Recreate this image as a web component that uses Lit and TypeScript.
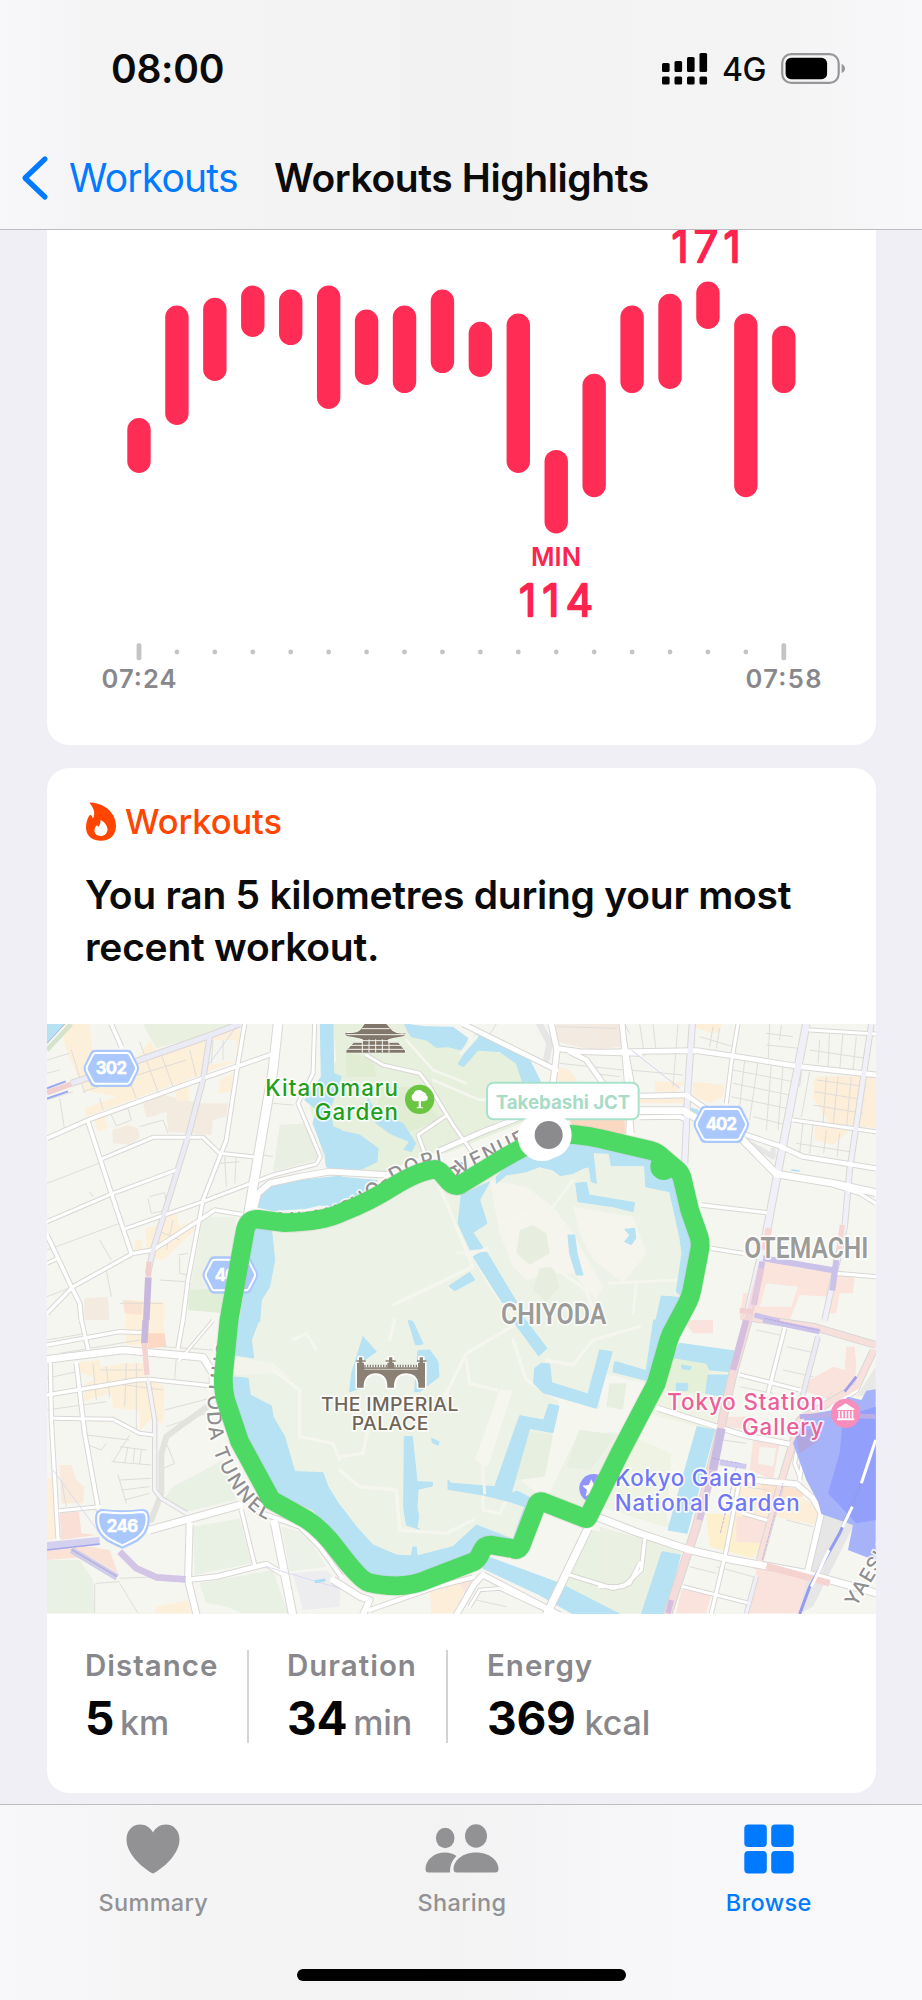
import { LitElement, html, svg, css } from "lit";
import { customElement } from "lit/decorators.js";

const BARS: [number, number][] = [
  [418.1, 472.9], [305.5, 424.9], [297.8, 380.9], [285.6, 337], [289.6, 345.1], [285.6, 409],
  [309.6, 385], [305.5, 393.1], [289.6, 373.1], [321.8, 376.9], [313.6, 472.9], [449.9, 533.4],
  [373.8, 497.2], [305.5, 393.1], [293.7, 389], [281.5, 328.9], [313.6, 497.2], [325.8, 393.1],
];

@customElement("heart-chart")
class HeartChart extends LitElement {
  static styles = css`
    :host { display: block; }
    svg { display: block; width: 829px; height: 515px; font-family: Inter, sans-serif; }
    .bar { fill: #ff2d55; }
    .tick { fill: #c4c4c6; }
    .num { fill: #ff2450; stroke: #ff2450; stroke-width: 2.6; stroke-linejoin: round; font-size: 43.5px; font-weight: 300; text-anchor: middle; }
    .min { fill: #ff2450; font-size: 25.5px; font-weight: 600; text-anchor: middle; }
    .time { fill: #88888c; font-size: 25.5px; font-weight: 600; text-anchor: middle; }
  `;
  render() {
    const cx = (i: number) => 139 + 37.93 * i;
    return html`<svg viewBox="47 230 829 515">
      ${BARS.map(([a, b], i) => svg`<rect class="bar" x=${cx(i) - 11.7} y=${a} width="23.4" height=${b - a} rx="11.7"></rect>`)}
      ${BARS.map((_, i) => i === 0 || i === 17
        ? svg`<rect class="tick" x=${cx(i) - 2.4} y="643.3" width="4.8" height="17" rx="2"></rect>`
        : svg`<circle class="tick" cx=${cx(i)} cy="652" r="2.4"></circle>`)}
      <text class="num" x="706" y="262.4" textLength="69">171</text>
      <text class="min" x="556" y="566" textLength="50">MIN</text>
      <text class="num" x="556" y="616" textLength="74">114</text>
      <text class="time" x="139" y="688" textLength="75">07:24</text>
      <text class="time" x="783.5" y="688" textLength="76">07:58</text>
    </svg>`;
  }
}

/* The map is drawn on a grid of 3 units per pixel, split into six sheets. */
const SHEETS: Record<string, [number, number]> = {
  a: [0, 0], b: [900, 0], c: [1680, 0], d: [0, 900], e: [900, 900], f: [1680, 900],
};
type Area = [string, string, string];
type Road = [string, number, string, string?];
const at = (s: string) => `translate(${SHEETS[s][0]} ${SHEETS[s][1]})`;

const LAND: Area[] = [
  ["a", "#e9f0e0", "310,12 580,12 480,50 350,85"],
  ["a", "#fdf0da", "60,12 150,12 160,100 290,120 330,60 350,90 500,50 600,20 600,120 480,165 140,290 135,265 230,230 130,210 80,90"],
  ["a", "#f5f5f0", "170,12 230,12 240,80 165,85"],
  ["a", "#f5f5f0", "510,60 590,60 590,120 510,135"],
  ["a", "#f3ebe0", "310,250 350,220 480,250 565,250 560,290 520,300 515,345 385,335 380,275 320,295"],
  ["a", "#f3ebe0", "218,330 265,315 295,325 300,355 270,375 220,370"],
  ["a", "#fdf0da", "408,190 445,180 450,240 410,245"],
  ["a", "#fdf0da", "540,180 580,160 575,215 535,220"],
  ["a", "#fdf0da", "165,300 195,290 205,325 175,335"],
  ["a", "#e9efe2", "720,315 800,310 835,400 830,420 700,455"],
  ["a", "#ebf1e5", "490,590 590,590 575,720 555,880 445,870 450,810"],
  ["a", "#e0eed8", "450,810 550,805 555,880 445,870"],
  ["a", "#fdf0da", "345,620 385,580 410,580 420,620 460,600 465,630 370,720 340,715 320,680 315,625"],
  ["a", "#fdf0da", "285,660 305,660 310,700 285,700"],
  ["a", "#f3ebe0", "135,835 205,830 210,900 130,900"],
  ["a", "#fdf0da", "250,840 375,845 375,900 260,900"],
  ["a", "#fbe3d3", "250,840 310,845 305,885 255,880"],
  ["b", "#e6f0dc", "-20,12 200,12 380,60 560,130 590,180 590,290 320,400 270,400 130,460 -40,440 -90,260 -10,120"],
  ["b", "#e0edd2", "120,200 230,200 300,300 200,340 110,300"],
  ["b", "#e0edd2", "20,100 100,110 110,170 20,170"],
  ["b", "#f3ebe2", "650,12 840,12 845,80 760,90 650,65"],
  ["b", "#fdeeda", "655,140 690,150 715,185 650,185"],
  ["b", "#fbd8c2", "690,300 855,300 855,345 700,330"],
  ["b", "#fdeeda", "800,250 860,250 860,300 800,300"],
  ["c", "#f3e9df", "0,12 60,12 75,80 0,80"],
  ["c", "#fbd8c2", "0,300 75,300 75,340 0,325"],
  ["c", "#fdeeda", "165,185 255,185 230,215 165,215"],
  ["c", "#fdeeda", "280,185 375,195 370,230 330,250 280,225"],
  ["c", "#fdeeda", "120,235 250,235 250,250 120,250"],
  ["c", "#fdeeda", "285,12 365,12 360,35 340,40 290,25"],
  ["c", "#fdeeda", "645,170 830,165 830,325 690,310 640,235"],
  ["c", "#fdeeda", "645,320 750,330 700,375 645,360"],
  ["c", "#fae4dc", "500,720 600,745 700,745 765,775 760,820 720,820 710,880 680,880 690,830 600,825 570,900 420,900 430,820 470,820"],
  ["c", "#f5f5f0", "500,790 595,800 575,860 480,860"],
  ["d", "#fdf0da", "255,0 370,0 380,80 260,75"],
  ["d", "#fbd9c4", "325,40 375,40 380,80 325,85"],
  ["d", "#fdf0da", "120,125 180,120 180,140 260,130 310,130 330,180 375,200 370,310 330,300 300,335 300,270 220,265 215,220 130,245 140,190 165,175 120,155"],
  ["d", "#faeadb", "60,435 95,435 110,480 135,500 130,550 65,550"],
  ["d", "#fdf0da", "22,475 45,475 50,560 60,655 22,660"],
  ["d", "#f9dfd6", "60,580 118,575 125,640 170,645 65,660"],
  ["d", "#fae3d6", "22,680 60,665 210,690 235,760 150,710 22,720"],
  ["d", "#e9f1e5", "400,500 550,420 590,540 440,575 370,540"],
  ["d", "#e9f1e5", "460,620 600,595 635,730 465,765"],
  ["d", "#e9f1e5", "22,720 120,720 160,780 165,880 22,880"],
  ["d", "#e9f1e5", "480,790 700,750 745,880 610,880 560,860 500,850"],
  ["d", "#ededf0", "760,760 860,750 900,790 900,860 790,870"],
  ["d", "#edf2e8", "725,620 800,640 860,740 750,755"],
  ["d", "#fdf0da", "350,860 445,840 455,880 345,880"],
  ["e", "#fdeeda", "270,800 375,785 370,830 340,880 275,880"],
  ["e", "#f8e5dc", "360,790 400,780 380,830"],
  ["e", "#e9f1e2", "760,630 900,670 900,880 830,880 650,810"],
  ["f", "#eef3e4", "200,60 420,100 340,330 260,640 0,560 0,440"],
  ["f", "#e5f0d8", "215,110 330,135 320,220 200,215"],
  ["f", "#eaf1e2", "0,620 250,690 180,880 0,880"],
  ["f", "#f9e3dc", "250,0 340,0 340,40 280,40"],
  ["f", "#f9e3dc", "630,180 700,140 735,150 740,80 765,80 770,140 760,230 690,240 620,215"],
  ["f", "#f7e4dc", "385,290 460,290 450,330 375,320"],
  ["f", "#f9e3dc", "460,360 540,370 520,480 450,450"],
  ["f", "#f5f5f0", "480,380 530,385 520,440 475,430"],
  ["f", "#fdeeda", "400,480 520,495 660,560 650,615 525,590 410,590"],
  ["f", "#fbe3cf", "480,485 610,510 610,530 500,540"],
  ["f", "#fdf0cd", "320,580 480,590 500,660 460,715 330,680"],
  ["f", "#f9e3dc", "410,590 505,590 500,670 410,665"],
  ["f", "#f9e3dc", "410,720 640,750 600,880 450,880 470,750"],
  ["f", "#f9e3dc", "245,810 335,820 320,880 230,880"],
  ["f", "#e6e6e6", "660,580 765,610 690,760 640,860 600,880 625,750"],
  ["f", "#e8e8e4", "828,140 828,220 770,230"],
];

const PALACE = "640,620 830,610 920,580 1130,460 1200,450 1250,500 1440,400 1530,360 1840,400 1920,460 1975,680 1940,860 1850,1090 1640,1490 1505,1440 1435,1590 1345,1575 1300,1630 1090,1700 970,1690 800,1490 690,1440 551,1080 570,900";

const GROUNDS: Area[] = [
  ["b", "#f5f5ee", "450,480 560,500 640,560 700,640 790,800 770,840 700,760 640,760 560,780 520,740 480,640"],
  ["b", "#f5f5ee", "700,560 880,590 920,700 850,790 760,720 720,640"],
  ["b", "#e7eedf", "540,630 580,615 620,640 630,700 570,735 530,700"],
  ["b", "#e7eedf", "600,745 640,740 660,800 620,845 580,810"],
  ["e", "#f5f6ee", "480,210 520,210 445,440 405,420"],
  ["e", "#f5f6ee", "660,230 860,290 800,340 720,330 620,540 540,480 610,470"],
  ["e", "#e7efe0", "565,335 640,345 615,470 525,480"],
  ["e", "#e7efe0", "720,330 830,345 750,450 680,440"],
  ["e", "#f5f6ee", "820,165 900,190 900,300 780,290"],
  ["e", "#e5eddc", "825,190 860,190 850,280 805,270"],
  ["f", "#f6f6f0", "0,160 140,190 60,340 0,330"],
  ["f", "#e7efe0", "30,190 80,190 70,270 20,260"],
  ["f", "#f5f6ee", "110,270 290,320 240,620 200,600 215,400 100,350"],
  ["d", "#f3f5ec", "580,110 700,130 760,180 700,160 580,165"],
];

const WATER: [string, string][] = [
  ["a", "842,12 880,12 882,160 905,170 870,270 880,320 905,330 905,465 860,440 857,405 820,310 832,270 795,240 845,170"],
  ["a", "655,510 700,490 905,468 905,562 840,555 800,565 700,572 650,560"],
  ["a", "645,620 695,625 705,720 690,800 665,840 660,905 600,905"],
  ["a", "22,12 75,12 22,70"],
  ["d", "590,0 658,0 635,60 642,114 583,105"],
  ["d", "575,170 625,175 632,225 695,258 700,290 735,350 765,455 850,458 865,500 902,560 902,670 820,570 700,520 640,400 575,240"],
  ["e", "0,555 50,620 100,675 170,705 215,708 220,680 230,682 232,708 340,680 410,615 520,658 555,560 510,545 430,525 325,508 325,480 335,490 465,500 540,287 612,300 628,252 658,258 640,338 570,325 515,520 532,513 575,535 540,700 430,690 400,740 260,790 80,790 0,690"],
  ["e", "194,350 218,350 232,485 278,487 278,498 235,508 232,560 237,590 232,625 240,628 200,615 192,560"],
  ["e", "522,5 550,-10 622,85 597,108"],
  ["e", "585,145 605,130 630,132 636,188 745,222 780,90 817,97 770,265 610,218 582,190"],
  ["e", "828,125 925,155 925,182 820,155"],
  ["e", "205,0 220,5 250,72 228,75"],
  ["e", "70,50 110,95 60,130 60,205 30,215 36,160"],
  ["e", "235,92 270,90 295,125 298,170 240,215 225,215"],
  ["e", "276,355 298,365 296,376 278,368"],
  ["e", "430,705 660,790 840,882 700,882 600,825 430,745"],
  ["f", "240,70 420,95 395,155 330,150 320,130 215,112"],
  ["f", "325,165 390,165 370,230 318,220"],
  ["f", "292,320 345,330 262,640 205,630"],
  ["f", "187,695 242,705 197,882 125,882"],
  ["f", "0,90 37,95 0,210"],
  ["f", "45,125 150,155 145,182 40,155"],
  ["f", "162,0 200,0 170,160 140,150"],
  ["f", "230,190 265,190 262,212 230,212"],
  ["f", "245,135 275,140 270,150 248,146"],
  ["c", "30,390 180,390 240,480 270,560 300,680 260,840 230,815 247,700 240,650 210,515 138,500 135,437 35,437"],
  ["c", "185,828 270,835 250,905 168,905"],
  ["c", "75,628 105,625 108,655 95,674 75,665 90,645"],
  ["c", "250,258 295,270 300,300 280,300"],
  ["b", "195,12 255,20 340,22 385,55 365,90 325,80 290,82 260,60 215,50 205,35"],
  ["b", "410,40 500,68 560,100 605,190 550,190 530,130 480,95 415,90 372,140 355,132 385,85"],
  ["b", "0,332 60,345 115,385 112,425 65,448 -10,446"],
  ["b", "-10,470 115,482 60,520 -10,562"],
  ["b", "85,235 97,255 100,280 190,310 228,370 215,395 193,388 210,365 150,340 110,310 90,270"],
  ["b", "470,470 540,400 700,370 870,380 870,435 815,435 808,400 760,398 765,440 770,490 755,485 748,440 730,445 700,460 662,467 640,450 600,440 560,455 500,465 470,490"],
  ["b", "365,525 450,485 420,540 442,610 400,638 430,683 395,697 355,610"],
  ["b", "400,710 437,690 532,848 488,848"],
  ["b", "328,798 390,757 405,780 345,812"],
  ["b", "685,645 705,645 712,700 730,765 710,765 690,700"],
  ["b", "708,490 740,487 748,525 885,548 880,575 820,560 715,545"],
];

const PATHS: Road[] = [
  ["b", 10, "160,855 400,740 300,500"], ["b", 10, "395,700 460,810 530,900"],
  ["b", 10, "380,705 440,685"], ["b", 10, "640,740 740,810 770,900"],
  ["e", 10, "165,0 150,60"], ["e", 10, "550,0 380,100 310,240"], ["e", 10, "380,120 390,190 470,210"],
  ["e", 10, "520,60 560,180 660,240"], ["e", 10, "0,410 70,400 90,300"],
  ["e", 10, "0,450 60,500 170,510 180,630 320,640 400,600"], ["e", 10, "430,430 430,570 480,580 520,500"],
  ["e", 10, "620,120 700,135 760,60 900,20"], ["d", 10, "700,150 780,210 780,350 880,370 900,420"],
  ["d", 8, "760,60 800,40 830,90"], ["c", 8, "30,790 230,780"], ["c", 8, "110,790 100,880"],
  ["b", 8, "500,600 640,560 700,480"], ["b", 8, "440,330 560,260 600,200"], ["b", 8, "280,180 420,240 540,230"],
  ["b", 8, "200,60 280,150 380,190"],
];

const LANES: [string, string][] = [
  ["a", "M22,120L90,100M95,90L135,220M130,215L440,120M300,65L360,230M360,90L400,200M22,240L100,215M60,235L75,330M215,280L265,265L275,300L230,318L215,285M300,320L370,300L385,340M22,490L190,425M22,690L240,610M180,660L215,720M200,750L215,830M22,830L100,800M330,530L375,518L385,570L335,580L325,535M415,705L445,700M420,710L420,760L445,765M360,780L440,785M555,410L560,500M590,410L585,490M540,430L600,425M640,400L700,410M700,250L760,255M150,515L160,530M450,90L470,170M520,60L515,130M550,60L550,120M240,850L370,850M240,105L290,235M22,160L60,150M180,235L190,270M400,600L380,690M350,630L420,660"],
  ["b", "M650,20L830,25M660,130L850,150M440,60L470,12M760,160L840,170"],
  ["c", "M120,12L135,110M160,12L170,100M235,12L220,200M90,150L250,165M300,50L400,80M340,20L330,80M360,25L350,85M500,40L580,50M510,12L505,130M545,15L540,60M500,75L600,85M400,150L580,185M435,120L420,260M475,125L450,300M515,130L500,330M550,140L535,330M400,190L570,225M395,230L560,265M460,290L560,315M610,110L600,200M630,155L605,290M660,60L655,130M690,30L685,140M730,40L720,150M770,50L760,150M630,90L800,115M650,180L800,200M645,215L795,240M640,255L790,280M680,170L670,310M715,170L700,320M755,170L740,325M610,310L600,400M640,315L630,400M680,330L672,400M720,340L712,410M590,370L750,395M800,330L828,340M90,40L75,12"],
  ["d", "M22,60L140,40M60,100L300,60M20,175L110,155M20,270L200,245M140,345L270,360M200,370L185,390L145,375M270,345L220,425M240,380L320,390M265,380L255,430M285,385L280,430M305,390L300,432M215,425L335,435M380,370L405,430L360,450M235,465L260,550M240,480L335,475M245,510L330,500M255,540L330,520M160,130L170,240M200,140L210,230M260,130L255,260M290,130L290,330M180,150L310,150M220,190L370,210M375,270L510,235M380,320L500,280M165,790L165,880M240,775L360,770M170,790L240,785M370,80L520,90M410,110L405,180M65,480L80,560M240,790L295,880"],
  ["e", "M700,770L830,800M410,840L500,860"],
  ["f", "M420,200L520,220M470,30L540,45M560,80L650,100M550,150L640,170M370,360L440,370M440,500L500,510M350,740L460,770M270,740L350,760M560,600L640,620"],
];

const ROADS: Road[] = [
  ["a", 11, "22,355 150,298 490,175 690,105"], ["a", 11, "215,12 245,80"],
  ["a", 10, "615,12 595,130 560,360 490,540 445,780 430,900"],
  ["a", 11, "145,305 215,520 275,700"], ["a", 9, "190,415 340,352 490,352 540,400 640,410"],
  ["a", 9, "22,605 220,520 410,450"], ["a", 9, "260,625 490,545 700,465 830,432 842,410 775,250 820,160 825,12"],
  ["a", 10, "22,880 100,800 280,700 340,690 480,600 525,570 605,583"],
  ["a", 11, "22,645 95,800 120,850 125,900"], ["a", 8, "22,730 55,715"],
  ["a", 26, "715,12 700,150 625,590"],
  ["a", 17, "645,560 655,520 690,490 780,470 870,455 1050,465"],
  ["a", 15, "95,190 300,120 500,50 600,12", "#ebebf6"],
  ["a", 13, "510,50 490,180 445,350 380,560 340,690 325,760", "#ebebf6"],
  ["d", 10, "22,75 240,35 310,38"], ["d", 20, "22,118 250,90 490,112 520,160 520,200"],
  ["d", 10, "22,225 290,180 330,178 510,197"], ["d", 10, "125,0 145,85"], ["d", 10, "430,0 415,85"],
  ["d", 10, "32,130 35,300 55,655"], ["d", 11, "110,130 135,340 180,590"],
  ["d", 9, "40,295 220,298 300,340 340,345"], ["d", 9, "60,572 180,560"],
  ["d", 10, "325,180 345,300 345,510 365,535 440,580", "#f3f3f8"],
  ["d", 20, "330,630 600,555"], ["d", 18, "450,615 445,780 472,890"], ["d", 10, "605,570 645,735"],
  ["d", 22, "705,610 760,890"], ["d", 14, "440,780 530,770 680,732 735,765"],
  ["d", 12, "640,570 780,620 840,680 905,770"], ["d", 6, "520,1 420,120"],
  ["b", 14, "300,392 430,335 560,285"], ["b", 9, "80,105 130,135 240,160 270,200 340,315 400,400"],
  ["b", 9, "315,290 235,345 255,400"], ["b", 14, "370,12 590,120 650,150"],
  ["b", 16, "635,12 652,90 640,190"], ["b", 14, "650,85 720,95 900,100"], ["b", 14, "690,95 740,120 790,190"],
  ["b", 14, "848,12 875,340"],
  ["c", 11, "65,12 95,180 85,340"], ["c", 14, "0,96 290,92 400,108 600,140 830,165"],
  ["c", 9, "415,12 395,130 380,250"], ["c", 9, "630,30 828,42"], ["c", 9, "580,300 828,335"],
  ["c", 10, "305,555 500,578"], ["c", 10, "335,685 430,700"], ["c", 10, "710,760 828,770"],
  ["c", 12, "120,292 240,290 262,300 255,430"],
  ["c", 16, "278,12 265,200 255,430", "#f0f0f9"],
  ["c", 14, "815,12 750,450 735,620 675,900", "#f0f0f9"],
  ["c", 20, "620,12 545,400 500,640 440,900", "#f0f0f9"],
  ["c", 13, "120,228 260,225 310,260 440,345 545,380 610,410 828,445"],
  ["c", 20, "120,272 250,272 300,300 430,360 530,462 700,490 828,518"], ["c", 10, "700,495 780,520 828,550"],
  ["f", 10, "420,165 600,210"], ["f", 10, "555,25 505,220"], ["f", 12, "655,50 600,260", "#ebebf8"],
  ["f", 14, "175,265 350,320 430,345 570,372"], ["f", 10, "420,480 380,690 335,880"],
  ["f", 9, "430,580 500,600"], ["f", 9, "250,800 450,850"], ["f", 10, "470,770 440,880", "#efeff9"],
  ["f", 10, "135,660 125,750 70,800 0,800"], ["e", 10, "690,765 820,805 870,790 900,730"],
  ["f", 12, "820,90 770,210 700,260"], ["f", 9, "600,480 610,410 590,400 585,430 600,470"],
  ["f", 22, "445,0 400,160 350,380 290,620 205,880", "#f5dcda"],
  ["f", 18, "430,-10 640,20 828,75", "#f7dfdc"],
  ["f", 18, "820,95 770,200 600,300 555,450 480,720", "#f8e0dc"],
  ["e", 20, "770,590 900,640 1050,690 1180,720 1400,760 1630,825"],
  ["f", 16, "455,480 590,492 640,535 665,580 625,750"],
  ["e", 22, "745,625 680,760 620,885"], ["e", 16, "430,765 660,885"], ["e", 16, "430,765 405,790 350,885"],
  ["e", 12, "90,870 290,800 400,772"], ["e", 18, "-20,780 60,830 90,840 70,885"], ["e", 8, "390,860 420,810 480,805 640,880"],
];

const TINTS: [string, number, string, string][] = [
  ["a", 16, "328,725 326,770", "#f2cfcf"], ["a", 20, "326,772 320,900", "#c9b8de"],
  ["a", 16, "22,218 95,192", "#f2cfcf"], ["a", 6, "22,205 78,184", "#98a7f2"], ["a", 6, "22,236 85,214", "#98a7f2"],
  ["a", 14, "22,90 95,12", "#d5e3cc"], ["a", 3, "22,70 75,12", "#a8b8d8"],
  ["a", 3, "510,130 590,20", "#d5d8f5"],
  ["d", 20, "318,0 314,70", "#c9b8de"], ["d", 16, "314,70 322,165", "#f4d3d0"],
  ["d", 24, "22,678 180,663", "#d4d0f0"], ["d", 5, "22,690 180,672", "#a3a8ec"],
  ["d", 20, "95,690 232,772", "#cfcde8"], ["d", 4, "95,688 232,770", "#b5b0e0"],
  ["d", 20, "240,695 290,745 350,772 438,778", "#d2c5e6"], ["d", 3, "40,450 180,640", "#dadaf3"],
  ["d", 3, "680,740 900,805", "#dadaf3"], ["d", 9, "825,785 857,780", "#a9def3"],
  ["c", 18, "490,715 710,752", "#cbc2ea"], ["c", 18, "710,720 698,812", "#cbc2ea"],
  ["c", 18, "488,725 462,855", "#d0c0e4"], ["c", 20, "508,625 495,690", "#f7d5d2"], ["c", 16, "728,615 718,690", "#f7d5d2"],
  ["c", 22, "485,745 445,900", "#f1cfd388"], ["c", 16, "420,872 460,875", "#f3cfd2"],
  ["c", 3, "95,90 240,205", "#d3d3f2"], ["c", 16, "465,885 540,905", "#cbc2ea"], ["c", 5, "575,450 600,453", "#a9def3"],
  ["f", 16, "490,0 660,35", "#cbc2ea"], ["f", 20, "440,0 400,150", "#d5bfdf"],
  ["f", 26, "365,325 340,450", "#c9bce2"], ["f", 20, "340,450 300,600", "#d8c4df"], ["f", 16, "360,428 440,440", "#cfcaf0"],
  ["f", 16, "215,840 205,880", "#d9bde0"], ["f", 20, "500,738 690,790", "#f5d3d0"],
];

const ROUTE = "M1525,345 C1570,338 1640,345 1690,358 L1835,392 Q1855,398 1868,412 L1915,452 Q1925,462 1929,480 L1950,570 L1978,650 Q1984,672 1980,690 L1957,810 Q1953,830 1943,850 L1895,940 Q1885,965 1880,985 L1850,1090 L1740,1300 L1645,1492 Q1640,1500 1630,1493 L1515,1448 Q1500,1440 1492,1452 L1445,1575 Q1435,1595 1420,1586 L1360,1576 Q1335,1573 1325,1595 Q1315,1620 1300,1626 L1165,1678 Q1090,1712 985,1687 Q960,1678 895,1592 Q850,1530 800,1498 L695,1440 L600,1265 L558,1140 Q550,1110 551,1070 L568,900 L615,640 Q622,594 655,598 L735,608 Q850,605 905,578 Q990,545 1060,500 Q1140,450 1188,448 Q1200,450 1215,470 Q1240,505 1262,494 L1350,440 Q1420,395 1525,345 Z";

const hex = (x: number, y: number, n: string) => svg`<g transform=${`translate(${x} ${y})`}>
  <path d="M-50,-56H50Q58,-56 62,-49L82,-8Q85,0 82,8L62,49Q58,56 50,56H-50Q-58,56 -62,49L-82,8Q-85,0 -82,-8L-62,-49Q-58,-56 -50,-56Z" fill="#aac8fb"></path>
  <path d="M-47,-46H47Q52,-46 55,-41L73,-6Q75,0 73,6L55,41Q52,46 47,46H-47Q-52,46 -55,41L-73,6Q-75,0 -73,-6L-55,-41Q-52,-46 -47,-46Z" fill="none" stroke="#fff" stroke-width="6"></path>
  <text class="shield" y="18" textLength="94">${n}</text></g>`;

@customElement("route-map")
class RouteMap extends LitElement {
  static styles = css`
    :host { display: block; }
    svg { display: block; width: 829px; height: 590px; font-family: Inter, sans-serif; }
    .line { fill: none; stroke-linejoin: round; stroke-linecap: round; }
    .flat { fill: none; stroke-linejoin: round; }
    .lane { fill: none; stroke: #dfddd9; stroke-width: 3; }
    .halo { paint-order: stroke; stroke: #ffffffd0; stroke-width: 10; stroke-linejoin: round; }
    .shield { fill: #fff; stroke: #fff; stroke-width: 1.5; font-size: 50px; font-weight: 700; text-anchor: middle; }
    .poi { font-size: 67px; font-weight: 550; }
    .green { fill: #1f9f1a; }
    .pink { fill: #ec5f98; }
    .violet { fill: #7078f5; }
    .sight { fill: #6e6658; font-size: 58px; font-weight: 550; }
    .area { fill: #9b9b99; font-family: Roboto, sans-serif; font-size: 86px; font-weight: 600; }
    .street { fill: #8f8f8f; font-size: 59px; font-weight: 500; }
    .jct { fill: #a9dcc6; font-size: 56px; font-weight: 650; }
  `;
  render() {
    return html`<svg viewBox="22 12 2487 1770">
      <rect x="0" y="0" width="2600" height="1800" fill="#f6f6f1"></rect>
      ${LAND.map(([s, c, p]) => svg`<polygon transform=${at(s)} fill=${c} points=${p}></polygon>`)}
      ${LANES.map(([s, d]) => svg`<path class="lane" transform=${at(s)} d=${d}></path>`)}
      <polygon points=${PALACE} fill="#edf2e6"></polygon>
      ${GROUNDS.map(([s, c, p]) => svg`<polygon transform=${at(s)} fill=${c} points=${p}></polygon>`)}
      ${PATHS.map(([s, w, p]) => svg`<polyline class="line" transform=${at(s)} stroke="#f5f6ee" stroke-width=${w} points=${p}></polyline>`)}
      ${WATER.map(([s, p]) => svg`<polygon transform=${at(s)} fill="#b6e2f4" stroke="#b6e2f4" stroke-width="3" stroke-linejoin="round" points=${p}></polygon>`)}
      <path d="M1250,700L1345,690M1330,1345L1335,1420" class="line" stroke="#f3f5ec" stroke-width="9"></path>
      <path d="M1265,100L1310,50" class="line" stroke="#f3f5ec" stroke-width="12"></path>
      <polyline class="line" points="510,1155 420,1220 380,1250 365,1300 365,1420 335,1500" stroke="#e3e3dd" stroke-width="18"></polyline>
      <polyline class="line" points="1500,12 1530,70 1520,120" stroke="#e6e6e6" stroke-width="20"></polyline>
      <polyline class="line" points="2130,370 2200,410 2200,390" stroke="#e6e6e6" stroke-width="16"></polyline>
      ${ROADS.map(([s, w, p]) => svg`<polyline class="flat" transform=${at(s)} stroke="#d9d7d4" stroke-width=${w + 6} points=${p}></polyline>`)}
      ${ROADS.map(([s, w, p, c]) => svg`<polyline class="line" transform=${at(s)} stroke=${c ?? "#ffffff"} stroke-width=${w} points=${p}></polyline>`)}
      ${TINTS.map(([s, w, p, c]) => svg`<polyline class="flat" transform=${at(s)} stroke=${c} stroke-width=${w} points=${p}></polyline>`)}
      <path d="M2168,1618L2230,1390M2090,1340L2042,1540M2020,1315L2100,1330M2175,895L2340,932" class="line" stroke="#a99ddd" stroke-width="2" stroke-dasharray="8 5"></path>
      <g transform=${at("f")}>
        <polygon points="580,370 620,285 700,270 745,230 785,240 800,212 828,208 828,722 745,690 760,615 665,582 655,545 620,480" fill="#a6b3f8"></polygon>
        <polygon points="730,290 828,260 828,600 770,610 685,520 720,400" fill="#929ffb"></polygon>
        <polygon points="590,350 640,320 660,360 600,400" fill="#b3a5dd"></polygon>
        <polyline points="600,290 700,285 828,290" class="flat" stroke="#b9aee6" stroke-width="14"></polyline>
        <polyline points="828,360 785,490 720,640 630,800 600,882" class="flat" stroke="#929cf0" stroke-width="9"></polyline>
        <polyline points="828,360 785,490" class="flat" stroke="#fff" stroke-width="9"></polyline>
        <path d="M758,560L728,622M688,690L635,800" class="flat" stroke="#fff" stroke-width="9"></path>
        <path d="M770,170L735,215" class="flat" stroke="#9f9fee" stroke-width="8"></path>
      </g>

      <path id="dori" fill="none" d="M655,620 L800,618 Q900,604 965,562 L1065,485 Q1150,436 1222,430 Q1235,468 1255,464 L1490,352"></path>
      <path id="tunnel" fill="none" d="M535,960 Q503,1080 503,1190 Q508,1280 545,1345 Q610,1480 700,1506 L800,1520"></path>
      <text class="street halo"><textPath href="#dori" textLength="895">DAIKANCHO-DORI AVENUE</textPath></text>
      <text class="street halo"><textPath href="#tunnel" textLength="606">CHIYODA TUNNEL</textPath></text>
      ${hex(215, 145, "302")} ${hex(572, 765, "402")} ${hex(2045, 313, "402")}
      <g transform="translate(248 1525)">
        <path d="M-60,-58Q0,-50 60,-58Q78,-58 81,-40Q88,10 45,40Q15,55 0,61Q-15,55 -45,40Q-88,10 -81,-40Q-78,-58 -60,-58Z" fill="#aac8fb"></path>
        <path d="M-57,-49Q0,-42 57,-49Q70,-49 72,-37Q77,6 40,31Q14,45 0,51Q-14,45 -40,31Q-77,6 -72,-37Q-70,-49 -57,-49Z" fill="none" stroke="#fff" stroke-width="6"></path>
        <text class="shield" y="11" textLength="94">246</text>
      </g>
      <circle cx="1662" cy="1405" r="43" fill="#9195f9"></circle>
      <path d="M1655,1378l8,17 19,2 -14,13 4,19 -17,-10 -17,10 4,-19 -14,-13 19,-2z" fill="#fff"></path>
      <text class="poi violet halo" x="1726" y="1397" textLength="424">Kokyo Gaien</text>

      <path d=${ROUTE} fill="none" stroke="#c9c0bb" stroke-width="62" stroke-linejoin="round" opacity=".3"></path>
      <path d=${ROUTE} fill="none" stroke="#4cd964" stroke-width="56" stroke-linejoin="round"></path>
      <circle cx="1872" cy="440" r="40" fill="#4cd964"></circle>

      <rect x="1342" y="188" width="455" height="110" rx="20" fill="#fff" stroke="#a9e2cb" stroke-width="6"></rect>
      <text class="jct" x="1368" y="268" textLength="404">Takebashi JCT</text>
      <circle cx="1507" cy="350" r="73" fill="#fff"></circle>
      <circle cx="1525" cy="345" r="71" fill="#fff"></circle>
      <circle cx="1527" cy="345" r="42" fill="#8b8b8e"></circle>

      <g fill="#81786b" stroke="#fff" stroke-width="3" paint-order="stroke">
        <path d="M975,12H1040L1058,32Q1075,44 1098,40L1094,48Q1060,54 1046,58V68H1076L1096,92V98H920V92L942,68H968V58Q950,52 920,48L916,38Q950,42 962,30Z"></path>
      </g>
      <path d="M920,44H1096M946,62H1070M930,76H1086M924,88H1092M966,26H1050" stroke="#f4f3ee" stroke-width="3"></path>
      <path d="M968,58V98M988,58V98M1008,58V98M1028,58V98M1048,58V98" stroke="#f4f3ee" stroke-width="3"></path>

      <g transform="translate(900 900)" fill="#8a8174" stroke="#fff" stroke-width="10" paint-order="stroke" stroke-linejoin="round">
        <path d="M52,203V128H58V112H68V128H73V142H143V128H148V112H158V128H163V142H235V128H240V112H250V128H256V203H236V190Q232,160 200,160Q166,160 163,195V203H143V195Q140,160 108,160Q76,160 72,195V203Z"></path>
      </g>
      <path d="M950,1023H978M1038,1023H1068M1132,1023H1160" stroke="#8a8174" stroke-width="4"></path>
      <path d="M974,1038H1042M1064,1038H1134" stroke="#8a8174" stroke-width="7" stroke-dasharray="4 4"></path>
      <path d="M974,1048H1134" stroke="#f4f3ee" stroke-width="2"></path>

      <circle cx="1140" cy="238" r="44" fill="#6ac541"></circle>
      <path d="M1137,262V243Q1118,247 1116,233Q1114,225 1122,221Q1124,212 1134,211Q1144,208 1150,216Q1160,218 1160,226Q1168,232 1162,240Q1155,246 1144,243V262H1150V265H1131V262Z" fill="#fff"></path>
      <text class="poi green halo" x="677" y="229" textLength="398">Kitanomaru</text>
      <text class="poi green halo" x="825" y="300" textLength="250">Garden</text>
      <text class="area halo" x="1384" y="911" textLength="316" lengthAdjust="spacingAndGlyphs">CHIYODA</text>
      <text class="area halo" x="2114" y="713" textLength="372" lengthAdjust="spacingAndGlyphs">OTEMACHI</text>
      <text class="sight halo" x="844" y="1172" textLength="412">THE IMPERIAL</text>
      <text class="sight halo" x="936" y="1231" textLength="230">PALACE</text>
      <text class="poi pink halo" x="1883" y="1170" textLength="470">Tokyo Station</text>
      <text class="poi pink halo" x="2107" y="1246" textLength="243">Gallery</text>
      <circle cx="2418" cy="1180" r="44" fill="#f68dba"></circle>
      <path d="M2418,1150L2444,1166V1170H2392V1166ZM2396,1173h5v20h-5zM2406,1173h5v20h-5zM2416,1173h5v20h-5zM2426,1173h5v20h-5zM2436,1173h5v20h-5zM2392,1195H2444V1201H2392Z" fill="#fff"></path>
      <text class="poi violet halo" x="1725" y="1473" textLength="555">National Garden</text>
      <text class="street halo" transform="translate(2448 1764) rotate(-59)" textLength="208">YAESU</text>
    </svg>`;
  }
}

@customElement("app-root")
class AppRoot extends LitElement {
  static styles = css`
    :host { display: block; width: 922px; height: 2000px; overflow: hidden; font-family: Inter, sans-serif; color: #0b0b0c; background: #f0eff6; }
    .page { display: flex; flex-direction: column; height: 2000px; }
    svg { display: block; flex: none; }
    header { height: 229px; border-bottom: 1.5px solid #bdbdc0; box-sizing: content-box; background: linear-gradient(90deg, #f8f8fb 0, #f4f4f5 10%, #f2f2f2 50%, #f4f4f5 85%, #f8f8fa 100%); flex: none; }
    .status { display: flex; align-items: center; height: 115px; padding: 11px 77px 0 111px; }
    .clock { font-size: 39px; font-weight: 600; letter-spacing: -.3px; flex: 1; line-height: 48px; }
    .net { font-size: 32px; font-weight: 500; margin: 0 15px 0 14px; line-height: 40px; letter-spacing: -.5px; position: relative; top: 1px; }
    .nav { display: flex; align-items: center; height: 103px; padding-left: 21px; line-height: 50px; font-size: 39px; }
    .back { color: #007aff; margin-left: 20px; letter-spacing: -.8px; width: 205px; }
    .title { font-weight: 600; letter-spacing: -.4px; }
    main { flex: 1; display: flex; flex-direction: column; gap: 23px; padding: 0 46px 0 47px; min-height: 0; }
    .card { background: #fff; border-radius: 22px; overflow: hidden; flex: none; }
    .chart { border-radius: 0 0 22px 22px; height: 514.5px; }
    .workout { height: 1025px; display: flex; flex-direction: column; }
    .intro { height: 222px; padding: 34px 39px 0 38px; }
    .tag { display: flex; align-items: center; height: 40px; gap: 8px; color: #ff4500; font-size: 34.5px; font-weight: 550; letter-spacing: -.1px; }
    .headline { margin: 27px 0 0; font-size: 39px; line-height: 52px; font-weight: 600; letter-spacing: -.26px; white-space: nowrap; }
    .stats { display: flex; padding: 36px 38px 0; }
    .stat { height: 93px; }
    .stat + .stat { border-left: 2px solid #d3d3d6; padding-left: 38px; }
    .first { width: 162px; }
    .second { width: 159px; }
    .stat:last-child { padding-left: 39px; }
    .name { font-size: 29.5px; font-weight: 600; color: #88888c; line-height: 30px; letter-spacing: 1px; }
    .value { display: flex; align-items: baseline; font-size: 46px; line-height: 50px; font-weight: 700; margin-top: 13px; color: #050505; letter-spacing: -.3px; }
    .unit { font-size: 34px; font-weight: 500; color: #88888c; margin-left: 6px; letter-spacing: -.1px; }
    .last { margin-left: 9px; }
    footer { height: 195px; border-top: 1.5px solid #bdbdc2; background: linear-gradient(90deg, #f8f8fa 0, #f4f4f5 20%, #f3f3f4 50%, #f8f8fb 75%, #f9f9fc 100%); flex: none; display: flex; flex-direction: column; align-items: center; }
    .tabs { display: flex; width: 100%; height: 164px; flex: none; }
    .tab { flex: 1; display: flex; flex-direction: column; align-items: center; padding-top: 18px; color: #929295; font-size: 23.5px; font-weight: 500; letter-spacing: .3px; gap: 13px; line-height: 30px; }
    .tab:first-child { padding-right: 2px; }
    .on { color: #007aff; }
    .home { width: 329px; height: 12px; border-radius: 6px; background: #000; }
  `;
  render() {
    return html`<div class="page">
      <header>
        <div class="status">
          <div class="clock">08:00</div>
          <svg width="46" height="32" viewBox="0 0 46 32"><g fill="#000">
            <rect x="0" y="10" width="7.6" height="9" rx="1.5"></rect><rect x="12.5" y="8" width="7.6" height="11" rx="1.5"></rect>
            <rect x="25" y="4" width="7.6" height="15" rx="1.5"></rect><rect x="37.5" y="0" width="7.6" height="19" rx="1.5"></rect>
            <rect x="0" y="23.5" width="7.6" height="8" rx="1.5"></rect><rect x="12.5" y="23.5" width="7.6" height="8" rx="1.5"></rect>
            <rect x="25" y="23.5" width="7.6" height="8" rx="1.5"></rect><rect x="37.5" y="23.5" width="7.6" height="8" rx="1.5"></rect></g>
          </svg>
          <div class="net">4G</div>
          <svg width="64" height="31" viewBox="0 0 64 31">
            <rect x="1.2" y="1.2" width="56.5" height="28.6" rx="9" fill="none" stroke="#97979a" stroke-width="2.2"></rect>
            <rect x="4.6" y="4.8" width="41.5" height="21.4" rx="5.5" fill="#000"></rect>
            <path d="M60.6,11Q64,12.5 64,15.5T60.6,20Z" fill="#97979a"></path>
          </svg>
        </div>
        <div class="nav">
          <svg width="28" height="46" viewBox="0 0 28 46"><path d="M24,4L4,23L24,42" fill="none" stroke="#007aff" stroke-width="5.2" stroke-linecap="round" stroke-linejoin="round"></path></svg>
          <div class="back">Workouts</div>
          <div class="title">Workouts Highlights</div>
        </div>
      </header>
      <main>
        <section class="card chart"><heart-chart></heart-chart></section>
        <section class="card workout">
          <div class="intro">
            <div class="tag">
              <svg width="32" height="40" viewBox="0 0 32 40"><path fill="#ff4500" fill-rule="evenodd" d="M5,1.5C4.500,.8 5,.3 6,.4C20,1.500 31,11 31,24C31,33 25,38.800 16,38.800C7,38.800 1,33.500 1,25.500C1,21 2,17.500 4,14C4.800,12.600 6.300,12.800 7,14.200L8,16.500C10.500,11.500 9,6.500 5,1.500ZM16.500,18.500C15.800,18 15.200,18.500 15.400,19.300C15.800,21.500 14.500,23.500 13.200,25C12.800,24 12.300,23.200 11.900,23.300C10.500,24.500 9.500,26.500 9.500,28.800C9.500,32 12,34 15.500,34C19.500,34 22.500,31.300 22.500,27.500C22.500,24 20,20.500 16.500,18.500Z"></path></svg>
              <span>Workouts</span>
            </div>
            <p class="headline">You ran 5 kilometres during your most<br />recent workout.</p>
          </div>
          <route-map></route-map>
          <div class="stats">
            <div class="stat first"><div class="name">Distance</div><div class="value">5<span class="unit">km</span></div></div>
            <div class="stat second"><div class="name">Duration</div><div class="value">34<span class="unit">min</span></div></div>
            <div class="stat"><div class="name">Energy</div><div class="value">369<span class="unit last">kcal</span></div></div>
          </div>
        </section>
      </main>
      <footer>
        <div class="tabs">
          <div class="tab">
            <svg width="54" height="52" viewBox="0 0 54 52"><path fill="#929295" d="M27,50.500C25.500,50.500 .5,35 .5,16.500C.5,7.500 6.500,1.500 14,1.500C20,1.500 24.500,5 27,9.500C29.500,5 34,1.500 40,1.500C47.500,1.500 53.500,7.500 53.500,16.500C53.500,35 28.500,50.500 27,50.500Z"></path></svg>
            <span>Summary</span>
          </div>
          <div class="tab">
            <svg width="74" height="52" viewBox="0 0 74 52"><g fill="#929295"><ellipse cx="20.200" cy="15" rx="9.300" ry="10.200"></ellipse><ellipse cx="51" cy="13" rx="11" ry="11.800"></ellipse><path d="M3.500,49.500Q.5,49.500 .5,46C.5,37 9,29.500 20,29.500Q27,29.500 31.500,33C27,37.500 25,42 25,49.500Z"></path><path d="M32,49.500Q28.500,49.500 28.500,46C28.500,38 37,29.500 51,29.500S73.500,38 73.500,46Q73.500,49.500 70,49.500Z"></path></g></svg>
            <span>Sharing</span>
          </div>
          <div class="tab on">
            <svg width="50" height="52" viewBox="0 0 50 52"><g fill="#007aff"><rect x=".3" y="1.500" width="22.500" height="22.500" rx="4"></rect><rect x="27.200" y="1.500" width="22.500" height="22.500" rx="4"></rect><rect x=".3" y="28" width="22.500" height="22.500" rx="4"></rect><rect x="27.200" y="28" width="22.500" height="22.500" rx="4"></rect></g></svg>
            <span>Browse</span>
          </div>
        </div>
        <div class="home"></div>
      </footer>
    </div>`;
  }
}
